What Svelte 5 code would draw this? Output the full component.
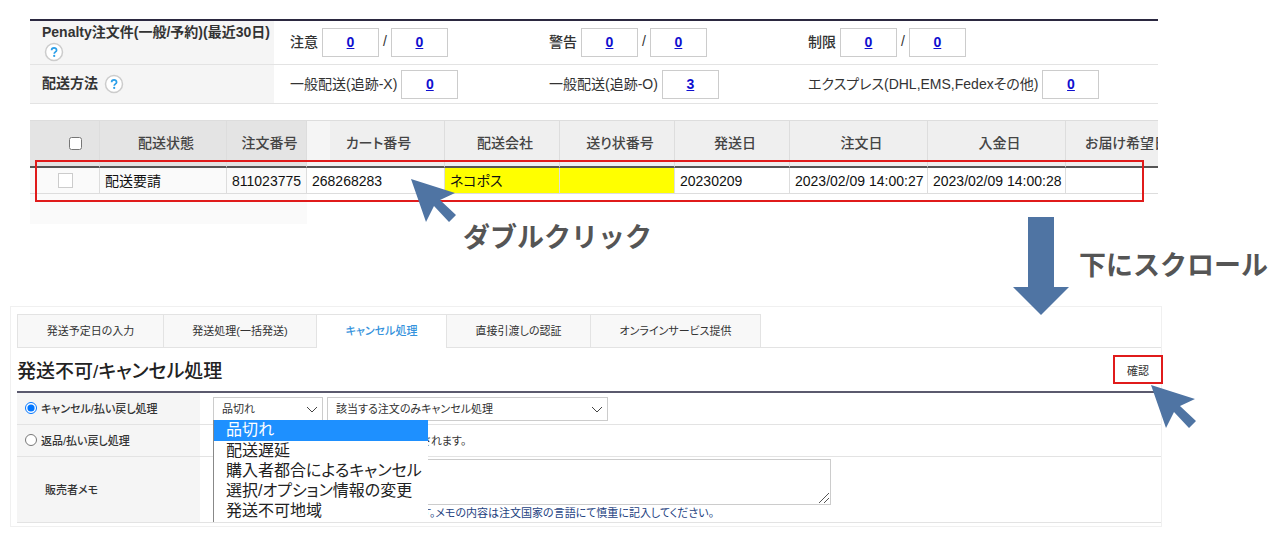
<script lang="ts">
  const columns = [
    { label: '配送状態', width: 127, frozen: true },
    { label: '注文番号', width: 80, frozen: true },
    { label: 'カート番号', width: 138, edge: true },
    { label: '配送会社', width: 115 },
    { label: '送り状番号', width: 115 },
    { label: '発送日', width: 115 },
    { label: '注文日', width: 138 },
    { label: '入金日', width: 138 },
    { label: 'お届け希望日', width: 116 },
  ];

  const order = [
    { value: '配送要請', frozen: true },
    { value: '811023775', frozen: true },
    { value: '268268283' },
    { value: 'ネコポス', marked: true },
    { value: '', marked: true },
    { value: '20230209' },
    { value: '2023/02/09 14:00:27' },
    { value: '2023/02/09 14:00:28' },
    { value: '' },
  ];

  const penalties = ['注意', '警告', '制限'];

  const methods = [
    { label: '一般配送(追跡-X)', count: 0 },
    { label: '一般配送(追跡-O)', count: 3 },
    { label: 'エクスプレス(DHL,EMS,Fedexその他)', count: 0 },
  ];

  const tabs = [
    { label: '発送予定日の入力', width: 147 },
    { label: '発送処理(一括発送)', width: 153 },
    { label: 'キャンセル処理', width: 130 },
    { label: '直接引渡しの認証', width: 144 },
    { label: 'オンラインサービス提供', width: 170 },
  ];

  const reasons = [
    '品切れ',
    '配送遅延',
    '購入者都合によるキャンセル',
    '選択/オプション情報の変更',
    '発送不可地域',
  ];

  let activeTab = $state(2);
  let reason = $state('品切れ');
  let mode = $state('cancel');
  let memo = $state('');
</script>

{#snippet pointer(name: string)}
  <svg class="pointer {name}" width="46" height="44" viewBox="0 0 46 44" aria-hidden="true">
    <polygon points="0,0 44,14 29,21 45,36 38,43 23,27 15,43" fill="#4f74a3" />
  </svg>
{/snippet}

{#snippet help()}
  <svg class="help" width="20" height="20" viewBox="0 0 20 20" aria-hidden="true">
    <circle cx="10" cy="10" r="8.5" fill="#fff" stroke="#ccc" stroke-width="1.5" />
    <path d="M7.6 8.2c0-3.2 5-3.2 5 0 0 1.7-2.4 1.7-2.4 3.6" fill="none" stroke="#2b9fe8" stroke-width="1.7" />
    <circle cx="10.2" cy="13.9" r="1.1" fill="#2b9fe8" />
  </svg>
{/snippet}

<main>
  <section class="orders">
    <table class="summary">
      <tbody>
        <tr class="penalty">
          <th scope="row">Penalty注文件(一般/予約)(最近30日)<br />{@render help()}</th>
          {#each penalties as label}
            <td>
              <div class="counts">
                <b>{label}</b>
                <a class="count" href="#list">0</a>
                <span>/</span>
                <a class="count" href="#list">0</a>
              </div>
            </td>
          {/each}
        </tr>
        <tr class="method">
          <th scope="row">配送方法 {@render help()}</th>
          {#each methods as m}
            <td>
              <div class="counts">
                <span>{m.label}</span>
                <a class="count" href="#list">{m.count}</a>
              </div>
            </td>
          {/each}
        </tr>
      </tbody>
    </table>

    <div class="grid">
      <div class="scroller">
        <table class="list">
          <colgroup>
            <col style="width: 70px" />
            {#each columns as c}
              <col style="width: {c.width}px" />
            {/each}
          </colgroup>
          <thead>
            <tr>
              <th class="frozen pick"><input type="checkbox" aria-label="全選択" /></th>
              {#each columns as c}
                <th class:frozen={c.frozen} class:edge={c.edge}>{c.label}</th>
              {/each}
            </tr>
          </thead>
          <tbody>
            <tr>
              <td class="frozen pick"><input type="checkbox" aria-label="選択" /></td>
              {#each order as cell}
                <td class:frozen={cell.frozen} class:marked={cell.marked}>{cell.value}</td>
              {/each}
            </tr>
          </tbody>
        </table>
        <div class="rest"></div>
      </div>
      <div class="outline"></div>
      {@render pointer('on-row')}
      <p class="note double">ダブルクリック</p>
    </div>
  </section>

  <div class="down">
    <svg width="56" height="98" viewBox="0 0 56 98" aria-hidden="true">
      <polygon points="15,0 41,0 41,70 56,70 28,98 0,70 15,70" fill="#4f74a3" />
    </svg>
    <p class="note">下にスクロール</p>
  </div>

  <section class="panel">
    <nav>
      {#each tabs as tab, i}
        <button
          type="button"
          class="tab"
          class:active={activeTab === i}
          style="width: {tab.width}px"
          onclick={() => (activeTab = i)}>{tab.label}</button
        >
      {/each}
    </nav>

    <div class="title">
      <h2>発送不可/キャンセル処理</h2>
      <div class="confirm">
        <button type="button">確認</button>
        {@render pointer('on-confirm')}
      </div>
    </div>

    <table class="form">
      <tbody>
        <tr>
          <th scope="row">
            <label><input type="radio" value="cancel" bind:group={mode} />キャンセル/払い戻し処理</label>
          </th>
          <td>
            <div class="selects">
              <div class="select reason">
                <select aria-label="理由" bind:value={reason}>
                  {#each reasons as r}
                    <option>{r}</option>
                  {/each}
                </select>
                <svg width="12" height="7" viewBox="0 0 12 7" aria-hidden="true">
                  <path d="M1 1l5 5 5-5" fill="none" stroke="#444" />
                </svg>
                <ul class="menu" role="listbox" aria-label="理由">
                  {#each reasons as r}
                    <li role="option" aria-selected={r === reason}>{r}</li>
                  {/each}
                </ul>
              </div>
              <div class="select scope">
                <select aria-label="範囲">
                  <option>該当する注文のみキャンセル処理</option>
                </select>
                <svg width="12" height="7" viewBox="0 0 12 7" aria-hidden="true">
                  <path d="M1 1l5 5 5-5" fill="none" stroke="#444" />
                </svg>
              </div>
            </div>
          </td>
        </tr>
        <tr>
          <th scope="row">
            <label><input type="radio" value="return" bind:group={mode} />返品/払い戻し処理</label>
          </th>
          <td><p class="hint">されます。</p></td>
        </tr>
        <tr class="memo">
          <th scope="row"><label for="memo">販売者メモ</label></th>
          <td>
            <div class="area">
              <textarea id="memo" bind:value={memo}></textarea>
              <svg width="12" height="12" viewBox="0 0 12 12" aria-hidden="true">
                <path d="M1 11L11 1M6 11l5-5" fill="none" stroke="#555" />
              </svg>
            </div>
            <p class="hint blue">す。メモの内容は注文国家の言語にて慎重に記入してください。</p>
          </td>
        </tr>
      </tbody>
    </table>
  </section>
</main>

<style>
  :global(body) {
    margin: 0;
    background: #fff;
  }

  main {
    position: relative;
    padding: 19px 118px 14px 10px;
    font-family: 'Liberation Sans', 'Noto Sans CJK JP', sans-serif;
    font-feature-settings: 'palt';
    font-size: 14px;
    color: #333;
  }

  table {
    border-collapse: separate;
    border-spacing: 0;
    table-layout: fixed;
  }

  th,
  td {
    box-sizing: border-box;
    padding: 0;
    text-align: left;
  }

  button,
  select,
  textarea {
    font: inherit;
    font-feature-settings: inherit;
    color: inherit;
  }

  p {
    margin: 0;
  }

  .orders {
    margin: 0 4px 0 20px;
  }

  .summary {
    width: 100%;
    border-top: 2px solid #2b2840;
  }

  .summary th {
    width: 244px;
    padding-left: 12px;
    background: #f5f5f5;
    border-bottom: 1px solid #e3e3e3;
    line-height: 18px;
    white-space: nowrap;
  }

  .summary td {
    padding-left: 16px;
    border-bottom: 1px solid #e3e3e3;
  }

  .summary td:not(:last-child) {
    width: 259px;
  }

  .penalty {
    height: 44px;
  }

  .method {
    height: 39px;
  }

  .help {
    margin-left: 2px;
    vertical-align: middle;
  }

  .counts {
    display: flex;
    align-items: center;
    gap: 4px;
    white-space: nowrap;
  }

  .counts b,
  .counts span {
    padding-bottom: 3px;
  }

  .counts b {
    font-weight: 500;
  }

  .count {
    box-sizing: border-box;
    width: 57px;
    border: 1px solid #ccc;
    color: #0f0fcf;
    font-weight: bold;
    line-height: 27px;
    text-align: center;
  }

  .grid {
    position: relative;
    margin-top: 16px;
  }

  .scroller {
    overflow: hidden;
  }

  .list {
    width: 1152px;
  }

  .list th {
    height: 48px;
    padding: 0 0 3px 6px;
    border-top: 1px solid #ddd;
    border-right: 1px solid #ddd;
    border-bottom: 2px solid #555;
    background: #efefef;
    color: #444;
    font-weight: 500;
    text-align: center;
    white-space: nowrap;
  }

  .list th.frozen {
    background: #e4e4e4;
  }

  .list th.edge {
    background: linear-gradient(to right, #f5f5f5 23px, #efefef 23px);
  }

  .list td {
    height: 26px;
    padding-left: 5px;
    border-right: 1px solid #ddd;
    border-bottom: 1px solid #ddd;
    color: #111;
    line-height: 20px;
    white-space: nowrap;
  }

  .list td.frozen {
    background: #fafafa;
  }

  .list td.marked {
    background: #ff0;
  }

  .list .pick {
    padding: 0;
  }

  .list input {
    display: block;
    width: 13px;
    height: 13px;
    margin: 0 0 0 39px;
  }

  .list td input {
    appearance: none;
    box-sizing: border-box;
    width: 15px;
    height: 15px;
    margin-left: 28px;
    border: 1px solid #ccc;
    background: #fff;
  }

  .rest {
    width: 277px;
    height: 30px;
    background: #fafafa;
  }

  .outline {
    position: absolute;
    top: 40px;
    right: 14px;
    left: 5px;
    box-sizing: border-box;
    height: 42px;
    border: 2px solid #e01b1b;
  }

  .pointer {
    position: absolute;
    z-index: 3;
  }

  .on-row {
    top: 59px;
    left: 381px;
  }

  .on-confirm {
    top: 30px;
    left: 38px;
  }

  .note {
    color: #555;
    font-size: 27px;
    font-weight: bold;
    font-feature-settings: normal;
    line-height: 40px;
    white-space: nowrap;
  }

  .double {
    position: absolute;
    top: 98px;
    left: 433px;
  }

  .down {
    position: absolute;
    top: 217px;
    right: 12px;
    display: flex;
    align-items: center;
    gap: 10px;
  }

  .panel {
    margin-top: 82px;
    padding: 7px 0 3px 6px;
    border: 1px solid #f0f0f0;
    font-size: 11px;
  }

  nav {
    display: flex;
    border-bottom: 1px solid #e3e3e3;
  }

  .tab {
    box-sizing: border-box;
    height: 33px;
    padding: 0 0 2px;
    border: 1px solid #e3e3e3;
    border-width: 1px 1px 0 0;
    background: #f8f8f8;
    cursor: pointer;
  }

  .tab:first-child {
    border-left-width: 1px;
  }

  .tab.active {
    height: 34px;
    margin-bottom: -1px;
    padding-bottom: 3px;
    background: #fff;
    color: #3492dc;
    font-weight: 500;
  }

  .title {
    display: flex;
    align-items: center;
    justify-content: space-between;
    height: 43px;
  }

  h2 {
    margin: 0;
    color: #222;
    font-size: 19px;
    font-weight: 500;
  }

  .confirm {
    position: relative;
    margin-right: -2px;
  }

  .confirm button {
    display: block;
    box-sizing: border-box;
    width: 50px;
    height: 29px;
    padding: 0;
    border: 2px solid #e01b1b;
    background: #fff;
  }

  .form {
    width: 100%;
    border-top: 2px solid #5b5a6e;
  }

  .form th,
  .form td {
    height: 32px;
    border-bottom: 1px solid #e3e3e3;
  }

  .form th {
    width: 183px;
    padding-bottom: 2px;
    background: #f5f5f5;
    font-weight: 500;
  }

  .form td {
    padding-left: 13px;
  }

  .form label {
    display: flex;
    align-items: center;
    gap: 4px;
    padding-left: 8px;
  }

  .form input {
    width: 12px;
    height: 12px;
    margin: 0;
  }

  .form .memo th,
  .form .memo td {
    height: 66px;
  }

  .form .memo label {
    padding-left: 28px;
  }

  .selects {
    display: flex;
    gap: 4px;
  }

  .select {
    position: relative;
  }

  .select.reason {
    width: 110px;
  }

  .select.scope {
    width: 281px;
  }

  .select select {
    display: block;
    appearance: none;
    width: 100%;
    height: 24px;
    padding: 0 8px;
    border: 1px solid #ccc;
    border-radius: 0;
    background: #fff;
  }

  .select svg {
    position: absolute;
    top: 9px;
    right: 5px;
    pointer-events: none;
  }

  .menu {
    position: absolute;
    top: 23px;
    left: 0;
    z-index: 2;
    box-sizing: border-box;
    width: 215px;
    margin: 0;
    padding: 0 0 1px;
    border-left: 1px solid #888;
    background: #fff;
    color: #222;
    font-size: 16px;
    line-height: 20px;
    list-style: none;
    white-space: nowrap;
  }

  .menu li {
    padding-left: 12px;
  }

  .menu li[aria-selected='true'] {
    padding-bottom: 1px;
    background: #1e90ff;
    color: #fff;
  }

  .hint {
    padding-left: 208px;
    line-height: 16px;
  }

  .hint.blue {
    color: #24427f;
  }

  .area {
    position: relative;
    width: 618px;
  }

  textarea {
    display: block;
    box-sizing: border-box;
    width: 100%;
    height: 46px;
    border: 1px solid #ccc;
    resize: none;
  }

  .area svg {
    position: absolute;
    right: 1px;
    bottom: 1px;
  }
</style>
